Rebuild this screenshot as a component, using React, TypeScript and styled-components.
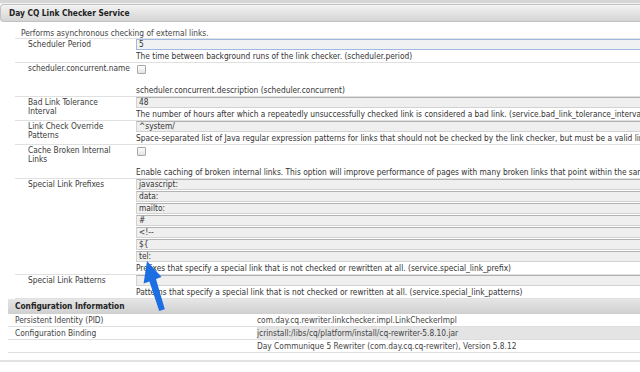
import React from "react";
import styled, { createGlobalStyle } from "styled-components";

const GlobalStyle = createGlobalStyle`
  body {
    margin: 0;
    background: #fff;
    font-family: "DejaVu Sans Condensed", "DejaVu Sans", Verdana, sans-serif;
    font-stretch: condensed;
  }
`;

type Field = {
  label: string;
  values?: string[];
  checkbox?: boolean;
  focused?: boolean;
  desc: string;
};

const fields: Field[] = [
  {
    label: "Scheduler Period",
    values: ["5"],
    focused: true,
    desc: "The time between background runs of the link checker. (scheduler.period)",
  },
  {
    label: "scheduler.concurrent.name",
    checkbox: true,
    desc: "scheduler.concurrent.description (scheduler.concurrent)",
  },
  {
    label: "Bad Link Tolerance Interval",
    values: ["48"],
    desc: "The number of hours after which a repeatedly unsuccessfully checked link is considered a bad link. (service.bad_link_tolerance_interval)",
  },
  {
    label: "Link Check Override Patterns",
    values: ["^system/"],
    desc: "Space-separated list of Java regular expression patterns for links that should not be checked by the link checker, but must be a valid link.",
  },
  {
    label: "Cache Broken Internal Links",
    checkbox: true,
    desc: "Enable caching of broken internal links. This option will improve performance of pages with many broken links that point within the same site.",
  },
  {
    label: "Special Link Prefixes",
    values: ["javascript:", "data:", "mailto:", "#", "<!--", "${", "tel:"],
    desc: "Prefixes that specify a special link that is not checked or rewritten at all. (service.special_link_prefix)",
  },
  {
    label: "Special Link Patterns",
    values: [""],
    desc: "Patterns that specify a special link that is not checked or rewritten at all. (service.special_link_patterns)",
  },
];

const info = [
  { label: "Persistent Identity (PID)", value: "com.day.cq.rewriter.linkchecker.impl.LinkCheckerImpl" },
  { label: "Configuration Binding", value: "jcrinstall:/libs/cq/platform/install/cq-rewriter-5.8.10.jar", shaded: true },
  { label: "", value: "Day Communique 5 Rewriter (com.day.cq.cq-rewriter), Version 5.8.12" },
];

const App = () => {
  return (
    <>
      <GlobalStyle />
      <Page>
        <TopStrip />
        <PanelHeader>Day CQ Link Checker Service</PanelHeader>
        <Intro>Performs asynchronous checking of external links.</Intro>

        <Form>
          {fields.map((f) => (
            <Row key={f.label}>
              <Label>{f.label}</Label>
              <Value>
                {f.checkbox && (
                  <CheckArea>
                    <Checkbox />
                  </CheckArea>
                )}
                {f.values?.map((v, i) => (
                  <TextBox key={i} focused={f.focused}>
                    {v}
                  </TextBox>
                ))}
                <Desc>{f.desc}</Desc>
              </Value>
            </Row>
          ))}
        </Form>

        <InfoHeader>Configuration Information</InfoHeader>
        {info.map((r, i) => (
          <InfoRow key={i}>
            <InfoLabel>{r.label}</InfoLabel>
            <InfoValue shaded={r.shaded}>{r.value}</InfoValue>
          </InfoRow>
        ))}
        <BottomLine />

        <Arrow width="45" height="60" viewBox="0 0 45 60">
          <polygon
            points="17,6 31.5,22 26,24 34.8,54.2 29.2,56 19.4,26.6 13.6,28.6"
            fill="#1c6fe3"
          />
        </Arrow>
      </Page>
    </>
  );
};

export default App;

const Page = styled.div`
  width: 640px;
  height: 372px;
  position: relative;
  overflow: hidden;
  background: #fff;
  font-size: 8.3px;
  color: #333;
`;

const TopStrip = styled.div`
  height: 3px;
  background: #d6d6d6;
  border-bottom: 1px solid #f2f2f2;
`;

const PanelHeader = styled.div`
  height: 16px;
  line-height: 16px;
  padding-left: 8px;
  border: 1px solid #c2c2c2;
  border-right: 0;
  border-radius: 4px 0 0 4px;
  background: linear-gradient(#f3f3f3, #d4d4d4);
  font-weight: bold;
  color: #222;
`;

const Intro = styled.div`
  padding: 6px 0 0 21px;
  height: 10px;
  line-height: 11px;
  color: #444;
`;

const Form = styled.div`
  margin-left: 15px;
  border-top: 1px solid #e2e2e2;
`;

const Row = styled.div`
  display: grid;
  grid-template-columns: 121px 1fr;
  padding-bottom: 1px;
  border-bottom: 1px solid #e0e0e0;
`;

const Label = styled.div`
  padding: 1px 14px 0 13px;
  line-height: 9px;
  color: #3a3a3a;
`;

const Value = styled.div`
  min-width: 0;
  overflow: hidden;
`;

const TextBox = styled.div<{ focused?: boolean }>`
  width: 600px;
  height: 9px;
  margin-bottom: 1px;
  padding-left: 2px;
  line-height: 9px;
  white-space: pre;
  background: ${(p) => (p.focused ? "#f0f1f3" : "#efefef")};
  border: 1px solid ${(p) => (p.focused ? "#9fb8e2" : "#d2d2d2")};
  border-top-color: ${(p) => (p.focused ? "#9fb8e2" : "#b2b2b2")};
  color: #333;
`;

const CheckArea = styled.div`
  height: 20px;
`;

const Checkbox = styled.div`
  width: 7px;
  height: 7px;
  margin: 2px 0 0 1px;
  border: 1px solid #a8a8a8;
  border-radius: 1px;
  background: linear-gradient(#fdfdfd, #e4e4e4);
`;

const Desc = styled.div`
  line-height: 10px;
  white-space: nowrap;
  color: #333;
`;

const InfoHeader = styled.div`
  margin-left: 8px;
  height: 15px;
  line-height: 15px;
  padding-left: 7px;
  background: linear-gradient(#e6e6e6, #cfcfcf);
  font-weight: bold;
  color: #222;
`;

const InfoRow = styled.div`
  margin-left: 8px;
  display: grid;
  grid-template-columns: 249px 1fr;
  border-bottom: 1px solid #dedede;
`;

const InfoLabel = styled.div`
  height: 12px;
  line-height: 12px;
  padding-left: 7px;
  color: #444;
`;

const InfoValue = styled.div<{ shaded?: boolean }>`
  height: 12px;
  line-height: 12px;
  white-space: nowrap;
  color: #444;
  background: ${(p) => (p.shaded ? "#e4e4e4" : "transparent")};
`;

const BottomLine = styled.div`
  margin-top: 7px;
  height: 2px;
  background: #e2e2e2;
`;

const Arrow = styled.svg`
  position: absolute;
  left: 130px;
  top: 255px;
`;
